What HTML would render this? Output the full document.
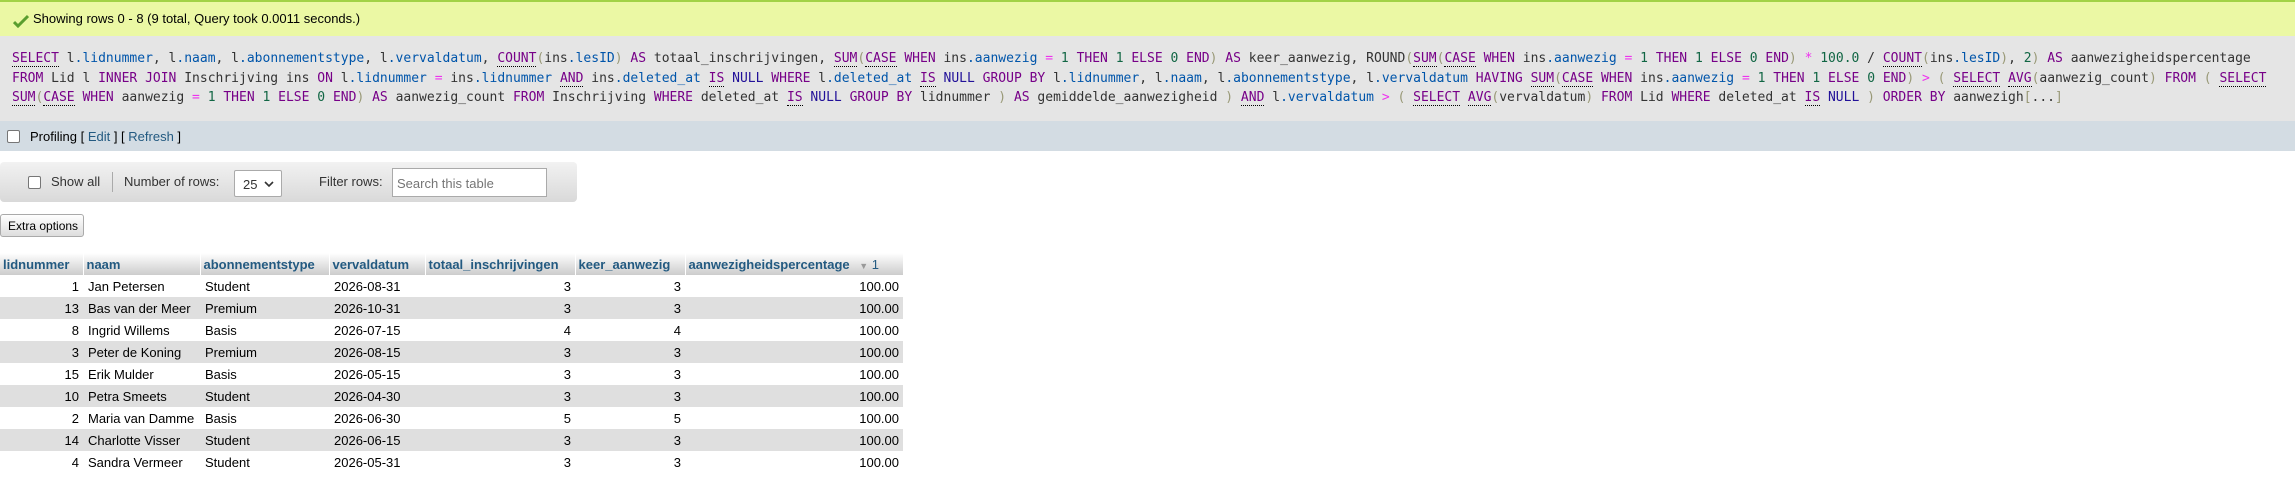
<!DOCTYPE html>
<html><head><meta charset="utf-8"><style>
*{box-sizing:border-box}
body{margin:0;width:2295px;height:480px;overflow:hidden;background:#fff;font-family:"Liberation Sans",Arial,sans-serif;font-size:13px;color:#000;position:relative}
.ok{position:absolute;left:0;top:0;width:2295px;height:36px;background:#ebf8a4;border-top:2px solid #a2d246;}
.ok span{position:absolute;left:33px;top:9px;font-size:13px}
.ok svg{position:absolute;left:13px;top:12px}
.sql{position:absolute;left:0;top:36px;width:2295px;height:85px;background:#e5e5e5;font-family:"DejaVu Sans Mono","Liberation Mono",monospace;font-size:13px;color:#333;white-space:pre;padding:13px 0 0 12px;line-height:19.5px}
.k{color:#708}.f{color:#708;border-bottom:1px dotted #000}.u{border-bottom:1px dotted #000}.v{color:#05a}.n{color:#164}.o{color:#e3e}.p{color:#997}.nl{color:#219}
.prof{position:absolute;left:0;top:121px;width:2295px;height:30px;background:#d3dce3;}
.cb{position:absolute;width:13px;height:13px;border:1px solid #767676;border-radius:2px;background:#fff}
.prof span{position:absolute;left:30px;top:8px}
a{color:#235a81;text-decoration:none}
.tb{position:absolute;left:0;top:162px;width:577px;height:40px;border-radius:4px;background:linear-gradient(#f2f2f2,#d9d9d9);color:#333}
.tb .t{position:absolute;top:12px}
.sel{position:absolute;left:234px;top:8px;width:48px;height:27px;background:#fff;border:1px solid #aaa;border-radius:2px;padding:6px 0 0 8px}
.inp{position:absolute;left:392px;top:6px;width:155px;height:29px;background:#fff;border:1px solid #aaa;padding:7px 4px;color:#757575}
.btn{position:absolute;left:0;top:214px;width:84px;height:23px;border:1px solid #aaa;border-radius:3px;background:linear-gradient(#fff,#ddd);font-size:12px;padding:4px 0 0 7px}
table{position:absolute;left:0;top:253px;border-collapse:collapse;table-layout:fixed;width:903px}
th{height:22px;background:linear-gradient(#fff,#ccc);color:#235a81;font-weight:bold;text-align:left;padding:0 3px;border-right:1px solid #fff;white-space:nowrap;overflow:hidden}
td{height:22px;padding:0 4px 0 5px;white-space:nowrap;background:#fff}
tbody tr:nth-child(even) td{background:#dfdfdf}
.r{text-align:right}
</style></head><body>
<div class="ok"><svg width="16" height="14" viewBox="0 0 16 14"><path d="M1 8 L5 12 L15 2" stroke="#5a9e2f" stroke-width="3" fill="none"/></svg><span>Showing rows 0 - 8 (9 total, Query took 0.0011 seconds.)</span></div>
<div class="sql"><span class="f">SELECT</span> l<span class="v">.lidnummer</span>, l<span class="v">.naam</span>, l<span class="v">.abonnementstype</span>, l<span class="v">.vervaldatum</span>, <span class="f">COUNT</span><span class="p">(</span>ins<span class="v">.lesID</span><span class="p">)</span> <span class="k">AS</span> totaal_inschrijvingen, <span class="f">SUM</span><span class="p">(</span><span class="f">CASE</span> <span class="k">WHEN</span> ins<span class="v">.aanwezig</span> <span class="o">=</span> <span class="n">1</span> <span class="k">THEN</span> <span class="n">1</span> <span class="k">ELSE</span> <span class="n">0</span> <span class="k">END</span><span class="p">)</span> <span class="k">AS</span> keer_aanwezig, ROUND<span class="p">(</span><span class="f">SUM</span><span class="p">(</span><span class="f">CASE</span> <span class="k">WHEN</span> ins<span class="v">.aanwezig</span> <span class="o">=</span> <span class="n">1</span> <span class="k">THEN</span> <span class="n">1</span> <span class="k">ELSE</span> <span class="n">0</span> <span class="k">END</span><span class="p">)</span> <span class="o">*</span> <span class="n">100.0</span> / <span class="f">COUNT</span><span class="p">(</span>ins<span class="v">.lesID</span><span class="p">)</span>, <span class="n">2</span><span class="p">)</span> <span class="k">AS</span> aanwezigheidspercentage
<span class="k">FROM</span> Lid l <span class="k">INNER JOIN</span> Inschrijving ins <span class="k">ON</span> l<span class="v">.lidnummer</span> <span class="o">=</span> ins<span class="v">.lidnummer</span> <span class="k u">AND</span> ins<span class="v">.deleted_at</span> <span class="k u">IS</span> <span class="nl">NULL</span> <span class="k">WHERE</span> l<span class="v">.deleted_at</span> <span class="k u">IS</span> <span class="nl">NULL</span> <span class="k">GROUP BY</span> l<span class="v">.lidnummer</span>, l<span class="v">.naam</span>, l<span class="v">.abonnementstype</span>, l<span class="v">.vervaldatum</span> <span class="k">HAVING</span> <span class="f">SUM</span><span class="p">(</span><span class="f">CASE</span> <span class="k">WHEN</span> ins<span class="v">.aanwezig</span> <span class="o">=</span> <span class="n">1</span> <span class="k">THEN</span> <span class="n">1</span> <span class="k">ELSE</span> <span class="n">0</span> <span class="k">END</span><span class="p">)</span> <span class="o">&gt;</span> <span class="p">(</span> <span class="f">SELECT</span> <span class="f">AVG</span><span class="p">(</span>aanwezig_count<span class="p">)</span> <span class="k">FROM</span> <span class="p">(</span> <span class="f">SELECT</span>
<span class="f">SUM</span><span class="p">(</span><span class="f">CASE</span> <span class="k">WHEN</span> aanwezig <span class="o">=</span> <span class="n">1</span> <span class="k">THEN</span> <span class="n">1</span> <span class="k">ELSE</span> <span class="n">0</span> <span class="k">END</span><span class="p">)</span> <span class="k">AS</span> aanwezig_count <span class="k">FROM</span> Inschrijving <span class="k">WHERE</span> deleted_at <span class="k u">IS</span> <span class="nl">NULL</span> <span class="k">GROUP BY</span> lidnummer <span class="p">)</span> <span class="k">AS</span> gemiddelde_aanwezigheid <span class="p">)</span> <span class="k u">AND</span> l<span class="v">.vervaldatum</span> <span class="o">&gt;</span> <span class="p">(</span> <span class="f">SELECT</span> <span class="f">AVG</span><span class="p">(</span>vervaldatum<span class="p">)</span> <span class="k">FROM</span> Lid <span class="k">WHERE</span> deleted_at <span class="k u">IS</span> <span class="nl">NULL</span> <span class="p">)</span> <span class="k">ORDER BY</span> aanwezigh<span class="p">[</span>...<span class="p">]</span></div>
<div class="prof"><div class="cb" style="left:7px;top:9px"></div><span>Profiling [ <a>Edit</a> ] [ <a>Refresh</a> ]</span></div>
<div class="tb"><div class="cb" style="left:28px;top:14px"></div><span class="t" style="left:51px">Show all</span><div style="position:absolute;left:112px;top:10px;width:1px;height:20px;background:#aaa"></div><span class="t" style="left:124px">Number of rows:</span><div class="sel">25 <svg width="10" height="7" viewBox="0 0 10 7" style="position:absolute;right:7px;top:10px"><path d="M1 1 L5 5 L9 1" stroke="#333" stroke-width="1.6" fill="none"/></svg></div><span class="t" style="left:319px">Filter rows:</span><div class="inp">Search this table</div></div>
<div class="btn">Extra options</div>
<table>
<colgroup><col style="width:83px"><col style="width:117px"><col style="width:129px"><col style="width:96px"><col style="width:150px"><col style="width:110px"><col style="width:218px"></colgroup>
<thead><tr><th>lidnummer</th><th>naam</th><th>abonnementstype</th><th>vervaldatum</th><th>totaal_inschrijvingen</th><th>keer_aanwezig</th><th>aanwezigheidspercentage <span style="color:#999;font-size:9px;font-weight:normal;margin-left:6px">▼</span> <span style="font-weight:normal">1</span></th></tr></thead>
<tbody>
<tr><td class="r">1</td><td>Jan Petersen</td><td>Student</td><td>2026-08-31</td><td class="r">3</td><td class="r">3</td><td class="r">100.00</td></tr>
<tr><td class="r">13</td><td>Bas van der Meer</td><td>Premium</td><td>2026-10-31</td><td class="r">3</td><td class="r">3</td><td class="r">100.00</td></tr>
<tr><td class="r">8</td><td>Ingrid Willems</td><td>Basis</td><td>2026-07-15</td><td class="r">4</td><td class="r">4</td><td class="r">100.00</td></tr>
<tr><td class="r">3</td><td>Peter de Koning</td><td>Premium</td><td>2026-08-15</td><td class="r">3</td><td class="r">3</td><td class="r">100.00</td></tr>
<tr><td class="r">15</td><td>Erik Mulder</td><td>Basis</td><td>2026-05-15</td><td class="r">3</td><td class="r">3</td><td class="r">100.00</td></tr>
<tr><td class="r">10</td><td>Petra Smeets</td><td>Student</td><td>2026-04-30</td><td class="r">3</td><td class="r">3</td><td class="r">100.00</td></tr>
<tr><td class="r">2</td><td>Maria van Damme</td><td>Basis</td><td>2026-06-30</td><td class="r">5</td><td class="r">5</td><td class="r">100.00</td></tr>
<tr><td class="r">14</td><td>Charlotte Visser</td><td>Student</td><td>2026-06-15</td><td class="r">3</td><td class="r">3</td><td class="r">100.00</td></tr>
<tr><td class="r">4</td><td>Sandra Vermeer</td><td>Student</td><td>2026-05-31</td><td class="r">3</td><td class="r">3</td><td class="r">100.00</td></tr>
</tbody>
</table>
</body></html>
